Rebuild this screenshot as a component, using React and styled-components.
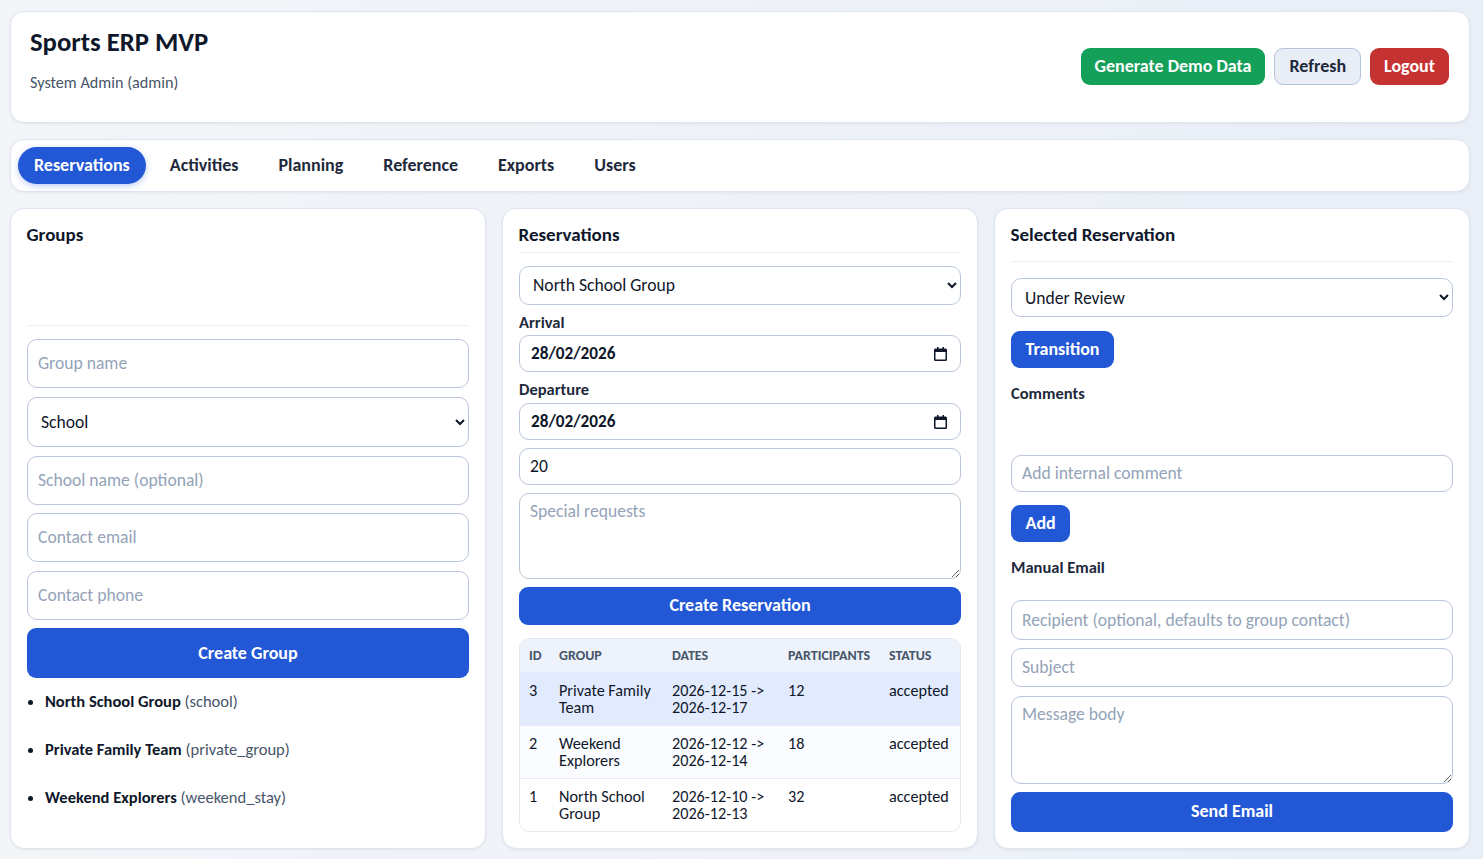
import React from "react";
import styled, { createGlobalStyle } from "styled-components";

const FONT = 'Carlito, "Fira Sans", sans-serif';

const Global = createGlobalStyle`
  * { box-sizing: border-box; }
  html, body { margin: 0; height: 100%; }
  body {
    background: linear-gradient(90deg, #f4f5f9 0%, #e9eef7 100%);
    font-family: ${FONT};
    color: #0f172a;
    overflow: hidden;
  }
  input::placeholder, textarea::placeholder { color: #94a3b8; opacity: 1; }
`;

const Page = styled.div`
  width: 1460px;
  margin-left: 10px;
  padding-top: 11px;
  display: flex;
  flex-direction: column;
  gap: 16px;
`;

const Card = styled.div`
  background: #fff;
  border: 1px solid #dde5f0;
  border-radius: 14px;
  box-shadow: 0 1px 3px rgba(15, 23, 42, 0.06);
`;

const Header = styled(Card)`
  height: 112px;
  display: flex;
  justify-content: space-between;
  align-items: center;
  padding: 0 20px 2px 19px;
`;

const TitleBlock = styled.div`
  align-self: flex-start;
`;

const Title = styled.h1`
  margin: 13px 0 0;
  font-size: 26.7px;
  line-height: 34px;
  font-weight: 600;
  color: #0f172a;
`;

const Subtitle = styled.p`
  margin: 15px 0 0;
  font-size: 16.2px;
  line-height: 18px;
  color: #475569;
`;

const Actions = styled.div`
  display: flex;
  gap: 9px;
`;

const ActionButton = styled.button`
  height: 37px;
  padding: 0 14px;
  font: 600 18px ${FONT};
  border-radius: 9px;
  border: ${(p) => (p.$variant === "ghost" ? "1px solid #b6c4da" : "none")};
  color: ${(p) => (p.$variant === "ghost" ? "#1e293b" : "#fff")};
  background: ${(p) =>
    p.$variant === "green" ? "#15a05a" : p.$variant === "red" ? "#c53232" : "#e8edf6"};
`;

const Tabs = styled(Card)`
  height: 53px;
  display: flex;
  align-items: center;
  padding: 0 7px;
  gap: 8px;
`;

const Tab = styled.button`
  height: 37px;
  padding: 0 16px 2px;
  border: none;
  border-radius: 19px;
  font: 600 18px ${FONT};
  color: ${(p) => (p.$active ? "#fff" : "#1e293b")};
  background: ${(p) => (p.$active ? "#2257d6" : "transparent")};
  box-shadow: ${(p) => (p.$active ? "0 2px 6px rgba(34, 87, 214, 0.3)" : "none")};
`;

const Columns = styled.div`
  display: grid;
  grid-template-columns: repeat(3, 476px);
  gap: 16px;
`;

const Panel = styled(Card)`
  height: 641px;
  padding: 16px;
  display: flex;
  flex-direction: column;
`;

const PanelTitle = styled.h2`
  margin: 0 0 0 -0.5px;
  font-size: 19px;
  line-height: 20px;
  font-weight: 600;
  color: #0f172a;
`;

const Rule = styled.div`
  height: 1px;
  background: #edf1f7;
  flex: none;
  margin-top: ${(p) => p.$top}px;
  margin-bottom: ${(p) => p.$bottom}px;
`;

const Stack = styled.div`
  display: flex;
  flex-direction: column;
  gap: ${(p) => p.$gap || 8}px;
  margin-top: ${(p) => p.$top || 0}px;
`;

const fieldBase = `
  width: 100%;
  display: block;
  border: 1px solid #b9c6d9;
  border-radius: 10px;
  background: #fff;
  color: #0f172a;
  outline: none;
  font-family: ${FONT};
  font-size: 17.6px;
`;

const Input = styled.input`
  ${fieldBase}
  height: ${(p) => p.$h}px;
  padding: 0 10px 1px;
`;

const DateWrap = styled.div`
  position: relative;
  height: 37px;
  flex: none;
`;

const DateField = styled.input`
  ${fieldBase}
  height: 37px;
  padding: 0 11px;
  font-size: 17.2px;
  font-weight: 600;
`;

const CalendarIcon = styled.svg`
  position: absolute;
  right: 14px;
  top: 12px;
  width: 13px;
  height: 14px;
`;

const Select = styled.select`
  ${fieldBase}
  height: ${(p) => p.$h}px;
  padding: 0 9px;
`;

const TextArea = styled.textarea`
  ${fieldBase}
  height: ${(p) => p.$h}px;
  padding: 6px 10px;
  resize: vertical;
`;

const PrimaryButton = styled.button`
  width: ${(p) => (p.$block ? "100%" : "auto")};
  height: ${(p) => p.$h}px;
  padding: 0 14.5px 1px;
  margin-top: ${(p) => p.$top || 0}px;
  align-self: ${(p) => (p.$block ? "stretch" : "flex-start")};
  border: none;
  border-radius: 9px;
  background: #2257d6;
  color: #fff;
  font: 600 18px ${FONT};
  flex: none;
`;

const Label = styled.label`
  display: block;
  font-size: 16.5px;
  line-height: 18px;
  font-weight: 600;
  color: #1e293b;
  margin-top: ${(p) => p.$top || 0}px;
  margin-bottom: ${(p) => p.$bottom || 0}px;
`;

const GroupList = styled.ul`
  margin: 7px 0 0;
  padding: 0 0 0 18px;
  font-size: 16.5px;
  color: #475569;
`;

const GroupItem = styled.li`
  height: 48px;
  line-height: 32px;
  strong { color: #0f172a; font-weight: 600; }
  &::marker { color: #0f172a; }
`;

const TableWrap = styled.div`
  margin-top: 13px;
  border: 1px solid #e2e8f2;
  border-radius: 10px;
  overflow: hidden;
`;

const Table = styled.table`
  width: 100%;
  table-layout: fixed;
  border-collapse: collapse;
  font-size: 16.2px;
  line-height: 17px;
`;

const Col = styled.col`
  width: ${(p) => p.$w}px;
`;

const Th = styled.th`
  height: 34px;
  padding: 0 0 0 9px;
  text-align: left;
  font-size: 14px;
  font-weight: 600;
  color: #475569;
  background: #edf2fb;
  text-transform: uppercase;
`;

const Row = styled.tr`
  background: ${(p) => p.$bg};
  border-top: 1px solid ${(p) => p.$line};
`;

const Td = styled.td`
  height: 53px;
  padding: 9px 4px 0 9px;
  vertical-align: top;
  color: #0f172a;
`;

const rows = [
  { id: 3, group: "Private Family Team", from: "2026-12-15", to: "2026-12-17", n: 12, bg: "#e2ebfd", line: "#e2ebfd" },
  { id: 2, group: "Weekend Explorers", from: "2026-12-12", to: "2026-12-14", n: 18, bg: "#fafcff", line: "#e2ebfd" },
  { id: 1, group: "North School Group", from: "2026-12-10", to: "2026-12-13", n: 32, bg: "#fff", line: "#e8edf5" },
];

const widths = [30, 113, 116, 101, 80];

const DateInput = () => (
  <DateWrap>
    <DateField defaultValue="28/02/2026" />
    <CalendarIcon viewBox="0 0 13 14">
      <path
        fill="#0f172a"
        fillRule="evenodd"
        d="M3 0h1.5v1.5h4V0H10v1.5h1.5A1.5 1.5 0 0 1 13 3v9.5a1.5 1.5 0 0 1-1.5 1.5h-10A1.5 1.5 0 0 1 0 12.5V3a1.5 1.5 0 0 1 1.5-1.5H3V0zM1.5 5v7.5h10V5h-10z"
      />
    </CalendarIcon>
  </DateWrap>
);

export default function App() {
  return (
    <>
      <Global />
      <Page>
        <Header>
          <TitleBlock>
            <Title>Sports ERP MVP</Title>
            <Subtitle>System Admin (admin)</Subtitle>
          </TitleBlock>
          <Actions>
            <ActionButton $variant="green">Generate Demo Data</ActionButton>
            <ActionButton $variant="ghost">Refresh</ActionButton>
            <ActionButton $variant="red">Logout</ActionButton>
          </Actions>
        </Header>
        <Tabs>
          <Tab $active>Reservations</Tab>
          <Tab>Activities</Tab>
          <Tab>Planning</Tab>
          <Tab>Reference</Tab>
          <Tab>Exports</Tab>
          <Tab>Users</Tab>
        </Tabs>
        <Columns>
          <Panel>
            <PanelTitle>Groups</PanelTitle>
            <Rule $top={80} $bottom={13} />
            <Stack $gap={8.7}>
              <Input $h={49} placeholder="Group name" />
              <Select $h={50.4} defaultValue="School">
                <option>School</option>
              </Select>
              <Input $h={49} placeholder="School name (optional)" />
              <Input $h={49} placeholder="Contact email" />
              <Input $h={49} placeholder="Contact phone" />
              <PrimaryButton $block $h={50} $top={-0.5}>Create Group</PrimaryButton>
            </Stack>
            <GroupList>
              <GroupItem><strong>North School Group</strong> (school)</GroupItem>
              <GroupItem><strong>Private Family Team</strong> (private_group)</GroupItem>
              <GroupItem><strong>Weekend Explorers</strong> (weekend_stay)</GroupItem>
            </GroupList>
          </Panel>
          <Panel>
            <PanelTitle>Reservations</PanelTitle>
            <Rule $top={7} $bottom={13} />
            <Select $h={39} defaultValue="North School Group">
              <option>North School Group</option>
            </Select>
            <Label $top={8} $bottom={4}>Arrival</Label>
            <DateInput />
            <Label $top={8} $bottom={5}>Departure</Label>
            <DateInput />
            <Stack $gap={8} $top={8}>
              <Input $h={37} defaultValue="20" />
              <TextArea $h={86} placeholder="Special requests" />
              <PrimaryButton $block $h={38}>Create Reservation</PrimaryButton>
            </Stack>
            <TableWrap>
              <Table>
                <colgroup>
                  {widths.map((w, i) => <Col key={i} $w={w} />)}
                </colgroup>
                <thead>
                  <tr>
                    <Th>ID</Th><Th>Group</Th><Th>Dates</Th><Th>Participants</Th><Th>Status</Th>
                  </tr>
                </thead>
                <tbody>
                  {rows.map((r) => (
                    <Row key={r.id} $bg={r.bg} $line={r.line}>
                      <Td>{r.id}</Td>
                      <Td>{r.group}</Td>
                      <Td>{r.from} -&gt;<br />{r.to}</Td>
                      <Td>{r.n}</Td>
                      <Td>accepted</Td>
                    </Row>
                  ))}
                </tbody>
              </Table>
            </TableWrap>
          </Panel>
          <Panel>
            <PanelTitle>Selected Reservation</PanelTitle>
            <Rule $top={16} $bottom={16} />
            <Select $h={39} defaultValue="Under Review">
              <option>Under Review</option>
            </Select>
            <PrimaryButton $h={37} $top={14}>Transition</PrimaryButton>
            <Label $top={16}>Comments</Label>
            <Stack $top={53}>
              <Input $h={37} placeholder="Add internal comment" />
            </Stack>
            <PrimaryButton $h={37} $top={13}>Add</PrimaryButton>
            <Label $top={16}>Manual Email</Label>
            <Stack $gap={8.3} $top={24}>
              <Input $h={40} placeholder="Recipient (optional, defaults to group contact)" />
              <Input $h={39} placeholder="Subject" />
              <TextArea $h={88} placeholder="Message body" />
              <PrimaryButton $block $h={40}>Send Email</PrimaryButton>
            </Stack>
          </Panel>
        </Columns>
      </Page>
    </>
  );
}
